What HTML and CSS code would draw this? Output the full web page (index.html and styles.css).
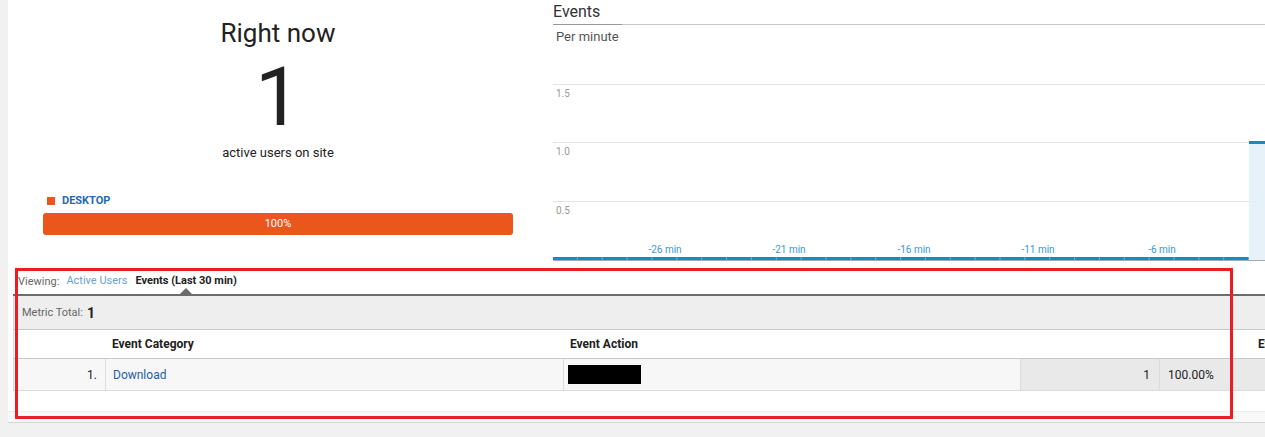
FILE: index.html
```html
<!DOCTYPE html>
<html lang="en">
<head>
  <meta charset="UTF-8">
  <title>Real-time Events</title>
  <link rel="stylesheet" href="styles.css">
</head>
<body>

  <div class="page">

    <!-- top: counter and chart -->
    <div class="top">
      <section class="now">
        <h1 class="now-title">Right now</h1>
        <div class="now-count">1</div>
        <div class="now-label">active users on site</div>

        <div class="device">
          <div class="device-legend"><span class="swatch"></span>DESKTOP</div>
          <div class="device-bar">100%</div>
        </div>
      </section>

      <section class="chart">
        <h2 class="chart-title">Events</h2>
        <div class="chart-sub">Per minute</div>
        <svg class="chart-plot" width="712" height="211" viewBox="0 0 712 211">
          <defs>
            <pattern id="minuteTicks" x="0" y="0" width="24.86" height="3" patternUnits="userSpaceOnUse">
              <rect x="0" y="0" width="24.86" height="3" fill="#0e8ccc"/>
              <rect x="24.1" y="0" width="0.8" height="3" fill="#7cc0e6"/>
            </pattern>
          </defs>
          <!-- grid -->
          <line x1="0" x2="712" y1="34.5" y2="34.5" stroke="#e4e4e4"/>
          <line x1="0" x2="712" y1="92.5" y2="92.5" stroke="#e4e4e4"/>
          <line x1="0" x2="712" y1="151.5" y2="151.5" stroke="#e4e4e4"/>
          <text class="y-label" x="3" y="47">1.5</text>
          <text class="y-label" x="3" y="105">1.0</text>
          <text class="y-label" x="3" y="164">0.5</text>

          <!-- current minute -->
          <rect x="696" y="91" width="20" height="119" fill="#e4f0f8" fill-opacity="0.9"/>
          <rect x="696" y="91" width="20" height="3" fill="#0e8ccc"/>

          <!-- zero bars -->
          <rect x="0" y="207" width="696" height="3" fill="url(#minuteTicks)"/>
          <rect x="0" y="210" width="712" height="1" fill="#aaaaaa"/>

          <text class="x-label" x="112" y="203">-26 min</text>
          <text class="x-label" x="236" y="203">-21 min</text>
          <text class="x-label" x="361" y="203">-16 min</text>
          <text class="x-label" x="485" y="203">-11 min</text>
          <text class="x-label" x="609" y="203">-6 min</text>
        </svg>
      </section>
    </div>

    <!-- report table -->
    <div class="report">
      <div class="tabs">
        <span class="tabs-caption">Viewing:</span>
        <a class="tab" href="#">Active Users</a>
        <span class="tab tab-active">Events (Last 30 min)</span>
      </div>

      <div class="metric-total">
        <span class="metric-caption">Metric Total:</span>
        <span class="metric-value">1</span>
      </div>

      <div class="grid-head">
        <div></div>
        <div class="head-cell">Event Category</div>
        <div class="head-cell">Event Action</div>
        <div class="head-cell head-metric">Events</div>
      </div>

      <div class="grid-row">
        <div class="cell cell-index">1.</div>
        <div class="cell"><a class="cell-link" href="#">Download</a></div>
        <div class="cell cell-action"><span class="redacted"></span></div>
        <div class="cell cell-num">1</div>
        <div class="cell cell-pct">100.00%</div>
      </div>
    </div>

    <div class="footer-strip"></div>

    <!-- annotation box -->
    <div class="highlight"></div>
  </div>

</body>
</html>
```

FILE: styles.css
```css
/* base */
body {
  margin: 0;
  background-color: #f1f1f1;
  font-family: Roboto, "Liberation Sans", Arial, sans-serif;
  color: #222;
  width: 1265px;
  height: 437px;
  overflow: hidden;
}

.page {
  position: relative;
  margin-left: 8px;
  width: 1257px;
  background-color: #fff;
  overflow: hidden;
}

.top {
  display: flex;
  height: 268px;
}

/* right now */
.now {
  width: 540px;
  flex: none;
  text-align: center;
}

.now-title {
  margin: 18px 0 0;
  font-size: 26px;
  line-height: 30px;
  font-weight: 400;
}

.now-count {
  margin-top: 8px;
  font-size: 82px;
  line-height: 82px;
  font-weight: 400;
}

.now-label {
  margin-top: 7px;
  font-size: 13px;
  line-height: 16px;
}

.device {
  margin: 33px 0 0 35px;
  width: 470px;
  text-align: left;
}

.device-legend {
  display: flex;
  align-items: center;
  padding-left: 4px;
  font-size: 11px;
  line-height: 13px;
  font-weight: 700;
  color: #1c6bb4;
}

.swatch {
  width: 8px;
  height: 8px;
  margin-right: 7px;
  background-color: #eb561d;
}

.device-bar {
  margin-top: 6px;
  height: 22px;
  line-height: 22px;
  border-radius: 3px;
  background-color: #eb561d;
  color: #fff;
  font-size: 11px;
  text-align: center;
}

/* chart */
.chart {
  margin-left: 5px;
  flex: 1;
  min-width: 0;
}

.chart-title {
  position: relative;
  margin: 0;
  height: 24px;
  line-height: 24px;
  font-size: 16px;
  font-weight: 400;
  color: #333;
  border-bottom: 1px solid #c8c8c8;
}

.chart-title::after {
  content: "";
  position: absolute;
  left: 0;
  bottom: -1px;
  width: 69px;
  height: 1px;
  background-color: #999;
}

.chart-sub {
  height: 25px;
  line-height: 24px;
  padding-left: 3px;
  font-size: 13px;
  color: #555;
}

.chart-plot {
  display: block;
}

.y-label {
  font-family: Roboto, "Liberation Sans", sans-serif;
  font-size: 10px;
  fill: #999;
}

.x-label {
  font-family: Roboto, "Liberation Sans", sans-serif;
  font-size: 10px;
  fill: #3a98d6;
  text-anchor: middle;
}

/* report */
.report {
  margin-left: 5px;
  padding-bottom: 20px;
  white-space: nowrap;
}

.tabs {
  display: flex;
  align-items: center;
  height: 26px;
  padding-left: 5px;
  font-size: 11px;
  border-bottom: 2px solid #6b6b6b;
}

.tabs-caption {
  color: #666;
  margin-right: 7px;
}

.tab {
  position: relative;
  height: 26px;
  line-height: 26px;
  margin-right: 8px;
  color: #6a9fd3;
  text-decoration: none;
}

.tab-active {
  color: #222;
  font-weight: 700;
}

.tab-active::after {
  content: "";
  position: absolute;
  left: 50%;
  bottom: 0;
  margin-left: -6px;
  border-left: 6px solid transparent;
  border-right: 6px solid transparent;
  border-bottom: 6px solid #6b6b6b;
}

.metric-total {
  display: flex;
  align-items: center;
  height: 33px;
  padding-left: 8px;
  background-color: #eee;
  border-left: 1px solid #dcdcdc;
  border-bottom: 1px solid #c9c9c9;
}

.metric-caption {
  font-size: 11px;
  color: #666;
  margin-right: 4px;
}

.metric-value {
  font-size: 14px;
  font-weight: 700;
}

.grid-head {
  display: grid;
  grid-template-columns: 92px 458px 694px 1fr;
  height: 28px;
  border-left: 1px solid #dcdcdc;
  border-bottom: 1px solid #c8c8c8;
}

.head-cell {
  padding-left: 6px;
  line-height: 28px;
  font-size: 12px;
  font-weight: 700;
  overflow: hidden;
}

.head-metric {
  padding-left: 0;
}

.grid-row {
  display: grid;
  grid-template-columns: 92px 458px 457px 139px 1fr;
  height: 31px;
  background-color: #f7f7f7;
  border-left: 1px solid #dcdcdc;
  border-bottom: 1px solid #dcdcdc;
}

.cell {
  display: flex;
  align-items: center;
  padding-left: 7px;
  font-size: 12px;
  border-right: 1px solid #dcdcdc;
}

.cell-index {
  justify-content: flex-end;
  padding-right: 8px;
}

.cell-link {
  color: #1f5fa6;
  text-decoration: none;
}

.cell-action {
  padding-left: 4px;
}

.redacted {
  width: 73px;
  height: 19px;
  background-color: #000;
}

.cell-num {
  justify-content: flex-end;
  padding-right: 9px;
  background-color: #e9e9e9;
}

.cell-pct {
  padding-left: 8px;
  background-color: #e9e9e9;
  border-right: none;
}

.footer-strip {
  height: 10px;
  background-color: #f8f8f8;
  border-top: 1px solid #ececec;
  border-bottom: 1px solid #d4d4d4;
}

/* red annotation */
.highlight {
  position: absolute;
  left: 7px;
  top: 268px;
  width: 1218px;
  height: 151px;
  box-sizing: border-box;
  border: 3px solid #ec1c24;
}
```
